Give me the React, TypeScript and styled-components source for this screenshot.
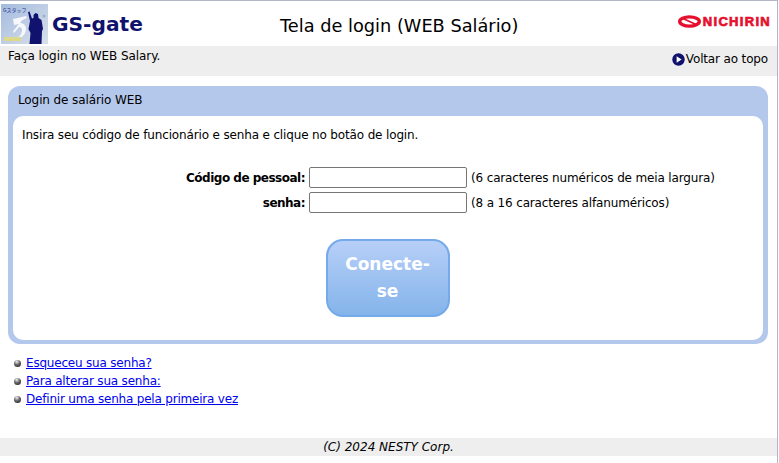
import React from 'react';
import styled, { createGlobalStyle } from 'styled-components';

const GlobalStyle = createGlobalStyle`
  html, body { margin: 0; padding: 0; background: #fff; }
  body {
    font-family: "DejaVu Sans", "Noto Sans", sans-serif;
    font-size: 12px;
    letter-spacing: -0.15px;
    color: #000;
  }
`;

const Page = styled.div`
  width: 778px;
  height: 463px;
  box-sizing: border-box;
  border-top: 1px solid #b1b5c6;
  border-right: 1px solid #b1b5c6;
  display: flex;
  flex-direction: column;
  overflow: hidden;
`;

const Header = styled.header`
  height: 45px;
  display: flex;
  align-items: center;
`;

const Brand = styled.div`
  display: flex;
  align-items: center;
  gap: 4px;
  width: 279px;
  height: 45px;
  padding-left: 1px;
`;

const BrandName = styled.span`
  font-size: 20.2px;
  font-weight: 700;
  letter-spacing: 0;
  color: #10126e;
`;

const Title = styled.h1`
  margin: 0;
  flex: 1;
  font-size: 17.75px;
  font-weight: 400;
  letter-spacing: 0;
  padding-top: 4px;
`;

const Maker = styled.div`
  display: flex;
  align-items: center;
  gap: 2px;
  padding: 0 6px 4px 0;
  color: #e60f2d;
  font-family: "Liberation Sans", Arial, sans-serif;
  font-size: 13px;
  font-weight: 700;
  letter-spacing: 1.3px;
  -webkit-text-stroke: 0.7px #e60f2d;
`;

const SubBar = styled.div`
  height: 30px;
  background: #eeeeee;
  display: flex;
  justify-content: space-between;
  padding: 3px 9px 0 8px;
  box-sizing: border-box;
`;

const Notice = styled.span`
  letter-spacing: -0.07px;
`;

const TopLink = styled.span`
  display: flex;
  align-items: center;
  gap: 1px;
  height: 24px;
  margin-top: -2px;
`;

const Panel = styled.section`
  margin: 10px 9px 0 8px;
  background: #b4c8ec;
  border-radius: 12px;
  padding: 0 5px 4px;
`;

const PanelTitle = styled.h2`
  margin: 0;
  height: 30px;
  line-height: 28px;
  padding-left: 5px;
  font-size: 12px;
  font-weight: 400;
  letter-spacing: -0.1px;
`;

const PanelBody = styled.div`
  background: #fff;
  border-radius: 10px;
  padding: 10px 9px 23px;
`;

const Intro = styled.p`
  margin: 0 0 23px;
  line-height: 18px;
`;

const Form = styled.form`
  display: grid;
  grid-template-columns: 283px 158px auto;
  column-gap: 4px;
  row-gap: 4px;
  align-items: center;
`;

const FieldLabel = styled.label`
  text-align: right;
  font-weight: 700;
  letter-spacing: -0.5px;
`;

const FieldInput = styled.input`
  box-sizing: border-box;
  width: 158px;
  height: 21px;
  border: 1px solid #767676;
  border-radius: 2px;
  background: #fff;
  padding: 0 2px;
`;

const Actions = styled.div`
  display: flex;
  justify-content: center;
  margin: 26px 0 0 -1px;
`;

const LoginButton = styled.button`
  width: 124px;
  height: 78px;
  box-sizing: border-box;
  border: 2px solid #74a9ea;
  border-radius: 17px;
  background: linear-gradient(#b7cff8, #84b4ea);
  color: #fff;
  font-family: inherit;
  font-size: 17px;
  font-weight: 700;
  line-height: 27px;
  letter-spacing: 0;
  padding: 0 12px;
`;

const LinkList = styled.ul`
  list-style: none;
  margin: 10px 0 0;
  padding: 0 0 0 14px;
`;

const LinkItem = styled.li`
  display: flex;
  align-items: center;
  gap: 5px;
  height: 18px;
  letter-spacing: -0.2px;
`;

const Ball = styled.span`
  width: 7px;
  height: 7px;
  border-radius: 50%;
  background: radial-gradient(circle at 40% 25%, #f0f0f0, #666 45%, #151515);
`;

const Anchor = styled.a`
  color: #0000ee;
  text-decoration: underline;
`;

const Footer = styled.footer`
  margin-top: 30px;
  height: 18px;
  line-height: 18px;
  background: #eeeeee;
  text-align: center;
  font-style: italic;
  letter-spacing: 0;
`;

function LogoMark() {
  return (
    <svg width="47" height="40" viewBox="0 0 47 40" aria-hidden="true">
      <defs>
        <linearGradient id="logoBg" x1="0" y1="0" x2="1" y2="1">
          <stop offset="0" stopColor="#a3bbdf" />
          <stop offset="1" stopColor="#d9e0ea" />
        </linearGradient>
      </defs>
      <rect width="47" height="40" fill="url(#logoBg)" />
      <path d="M12 15c5-1 9-2 13-3l1 2c-3 1-5 2-7 5 3 0 6 2 6 6 0 6-5 9-10 11 3-3 6-6 6-10 0-2-1-3-3-3-2 2-4 5-5 6-1-1-1-2 0-3 2-2 3-4 5-6l-5 1z" fill="#f6f8fc" />
      <path d="M27 8l1.5-.5 2.5 7 1.5-.5v-3l2-2 2.5 1 .5 4 3 2 1.5 9-1 2-.5 13h-12l1-11-2-4 1.5-8z" fill="#10126e" />
      <circle cx="43" cy="12" r="1.6" fill="#9fb0cf" />
      <text x="2" y="8" fontSize="5" letterSpacing="0" fill="#23308a" fontFamily="Noto Sans CJK JP, sans-serif">Gスタッフ</text>
      <rect x="3" y="33" width="17" height="4" fill="#dcd98a" />
    </svg>
  );
}

function MakerMark() {
  return (
    <svg width="23" height="13" viewBox="0 0 23 13" aria-hidden="true">
      <ellipse cx="11.5" cy="6.5" rx="9.8" ry="4.6" fill="none" stroke="#e60f2d" strokeWidth="3.4" />
      <path d="M5 3.5l13 6" stroke="#e60f2d" strokeWidth="1.8" />
    </svg>
  );
}

function PlayIcon() {
  return (
    <svg width="13" height="13" viewBox="0 0 13 13" aria-hidden="true">
      <circle cx="6.5" cy="6.5" r="6.2" fill="#10106e" />
      <path d="M4.6 3.3l5 3.2-5 3.2z" fill="#fff" />
    </svg>
  );
}

export default function App() {
  return (
    <Page>
      <GlobalStyle />
      <Header>
        <Brand>
          <LogoMark />
          <BrandName>GS-gate</BrandName>
        </Brand>
        <Title>Tela de login (WEB Salário)</Title>
        <Maker>
          <MakerMark />
          NICHIRIN
        </Maker>
      </Header>
      <SubBar>
        <Notice>Faça login no WEB Salary.</Notice>
        <TopLink>
          <PlayIcon />
          Voltar ao topo
        </TopLink>
      </SubBar>
      <Panel>
        <PanelTitle>Login de salário WEB</PanelTitle>
        <PanelBody>
          <Intro>Insira seu código de funcionário e senha e clique no botão de login.</Intro>
          <Form>
            <FieldLabel>Código de pessoal:</FieldLabel>
            <FieldInput type="text" />
            <span>(6 caracteres numéricos de meia largura)</span>
            <FieldLabel>senha:</FieldLabel>
            <FieldInput type="password" />
            <span>(8 a 16 caracteres alfanuméricos)</span>
          </Form>
          <Actions>
            <LoginButton type="button">Conecte-se</LoginButton>
          </Actions>
        </PanelBody>
      </Panel>
      <LinkList>
        <LinkItem><Ball /><Anchor href="#">Esqueceu sua senha?</Anchor></LinkItem>
        <LinkItem><Ball /><Anchor href="#">Para alterar sua senha:</Anchor></LinkItem>
        <LinkItem><Ball /><Anchor href="#">Definir uma senha pela primeira vez</Anchor></LinkItem>
      </LinkList>
      <Footer>(C) 2024 NESTY Corp.</Footer>
    </Page>
  );
}
